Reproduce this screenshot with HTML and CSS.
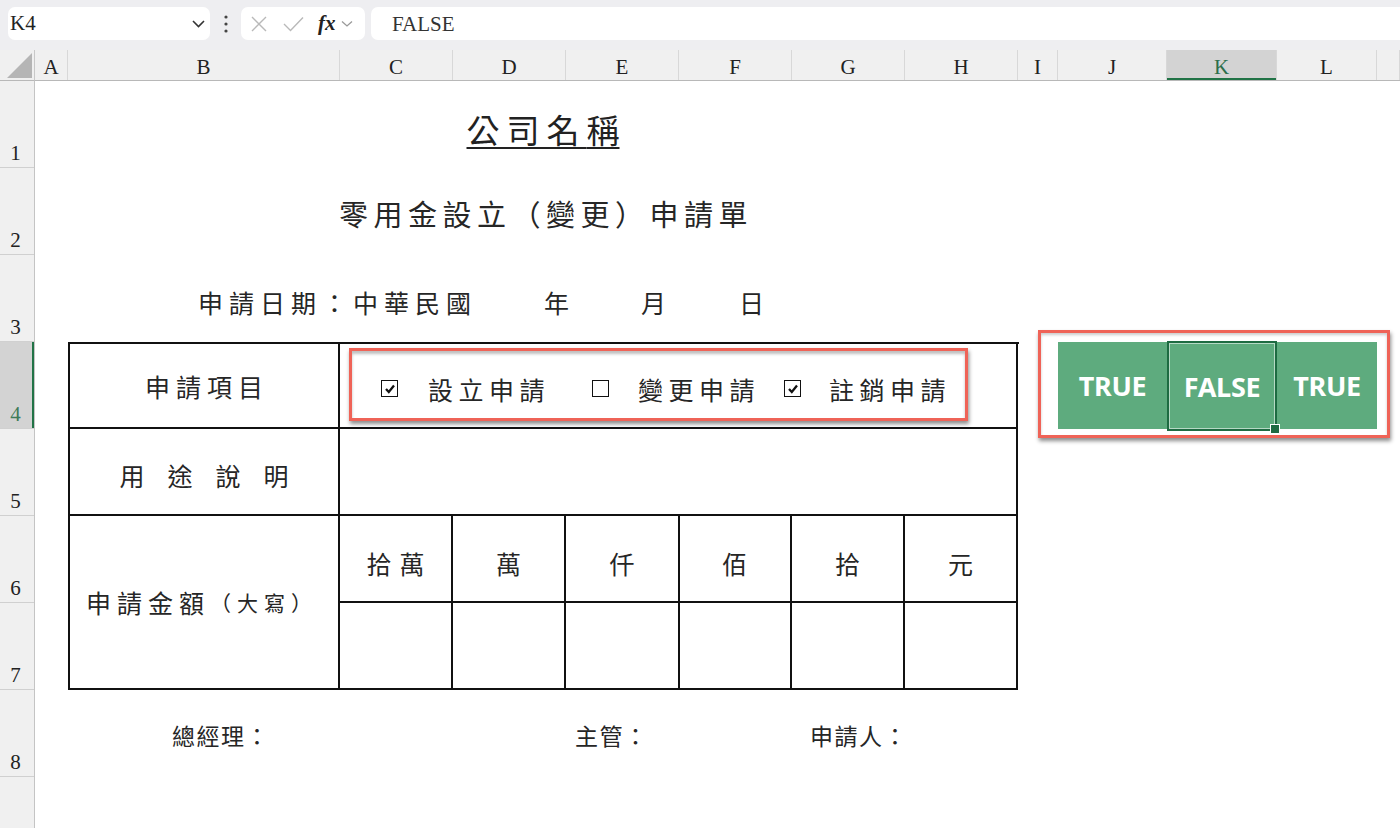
FILE: index.html
```html
<!DOCTYPE html>
<html lang="zh-Hant">
<head>
<meta charset="utf-8">
<title>零用金設立（變更）申請單</title>
<link rel="stylesheet" href="styles.css">
</head>
<body>
<div class="app">
  <div class="fbar">
    <div class="namebox">
      <span class="nb-text">K4</span>
      <svg class="chev" width="13" height="8" viewBox="0 0 13 8"><path d="M1 1 L6.5 6.5 L12 1" fill="none" stroke="#333" stroke-width="1.6"/></svg>
    </div>
    <div class="vdots">
      <svg width="4" height="18" viewBox="0 0 4 18"><circle cx="2" cy="2" r="1.6" fill="#444"/><circle cx="2" cy="9" r="1.6" fill="#444"/><circle cx="2" cy="16" r="1.6" fill="#444"/></svg>
    </div>
    <div class="fxgroup">
      <svg class="ic-x" width="18" height="18" viewBox="0 0 18 18"><path d="M2 2 L16 16 M16 2 L2 16" fill="none" stroke="#b9b9b9" stroke-width="1.4"/></svg>
      <svg class="ic-ok" width="21" height="16" viewBox="0 0 21 16"><path d="M1 8 L7.5 14.5 L20 1.5" fill="none" stroke="#b9b9b9" stroke-width="1.4"/></svg>
      <span class="fx">fx</span>
      <svg class="ic-chev" width="12" height="8" viewBox="0 0 12 8"><path d="M1 1.5 L6 6 L11 1.5" fill="none" stroke="#9a9a9a" stroke-width="1.3"/></svg>
    </div>
    <div class="formula">FALSE</div>
  </div>

  <div class="sheet">
    <div class="corner">
      <svg width="35" height="31" viewBox="0 0 35 31"><polygon points="7,28 32,28 32,3" fill="#b5b5b5"/></svg>
    </div>
    <div class="colheads">
      <div class="ch">A</div>
      <div class="ch">B</div>
      <div class="ch">C</div>
      <div class="ch">D</div>
      <div class="ch">E</div>
      <div class="ch">F</div>
      <div class="ch">G</div>
      <div class="ch">H</div>
      <div class="ch">I</div>
      <div class="ch">J</div>
      <div class="ch sel">K</div>
      <div class="ch">L</div>
      <div class="ch last"></div>
    </div>
    <div class="rowheads">
      <div class="rh">1</div>
      <div class="rh">2</div>
      <div class="rh">3</div>
      <div class="rh sel">4</div>
      <div class="rh">5</div>
      <div class="rh">6</div>
      <div class="rh">7</div>
      <div class="rh">8</div>
      <div class="rh"></div>
    </div>
    <div class="cells">
      <div class="title"><span class="title-text">公司名<span class="nols">稱</span></span></div>
      <div class="subtitle"><span>零用金設立（變更）申請單</span></div>
      <div class="date">
        <span class="d-main">申請日期：中華民國</span>
        <span class="d-y">年</span>
        <span class="d-m">月</span>
        <span class="d-d">日</span>
      </div>

      <div class="form">
        <div class="fc lab-item">申請項目</div>
        <div class="fc items">
          <div class="items-box">
            <span class="cb cb1 on"><svg width="14" height="14" viewBox="0 0 14 14"><path d="M3 7 L5.8 10 L11 3.6" fill="none" stroke="#111" stroke-width="2.3"/></svg></span>
            <span class="lbl lbl1">設立申請</span>
            <span class="cb cb2"></span>
            <span class="lbl lbl2">變更申請</span>
            <span class="cb cb3 on"><svg width="14" height="14" viewBox="0 0 14 14"><path d="M3 7 L5.8 10 L11 3.6" fill="none" stroke="#111" stroke-width="2.3"/></svg></span>
            <span class="lbl lbl3">註銷申請</span>
          </div>
        </div>
        <div class="fc lab-use"><span>用</span><span>途</span><span>說</span><span>明</span></div>
        <div class="fc use-val"></div>
        <div class="fc lab-amt"><span class="amt-main">申請金額</span><span class="amt-small">（大寫）</span></div>
        <div class="fc unit">拾萬</div>
        <div class="fc unit">萬</div>
        <div class="fc unit">仟</div>
        <div class="fc unit">佰</div>
        <div class="fc unit">拾</div>
        <div class="fc unit">元</div>
        <div class="fc"></div>
        <div class="fc"></div>
        <div class="fc"></div>
        <div class="fc"></div>
        <div class="fc"></div>
        <div class="fc"></div>
      </div>

      <div class="sig sig1">總經理：</div>
      <div class="sig sig2">主管：</div>
      <div class="sig sig3">申請人：</div>

      <div class="green">
        <div class="g">TRUE</div>
        <div class="g gk">FALSE</div>
        <div class="g">TRUE</div>
        <div class="annot"></div>
      </div>
    </div>
  </div>
</div>
</body>
</html>
```

FILE: styles.css
```css
* {
  box-sizing: border-box;
  margin: 0;
  padding: 0;
}

html, body {
  width: 1400px;
  height: 828px;
  overflow: hidden;
  background: #ffffff;
}

body {
  font-family: "Noto Sans CJK TC", "Noto Sans CJK SC", sans-serif;
  color: #262626;
}

.app {
  display: flex;
  flex-direction: column;
  height: 828px;
}

/* ---------- formula bar ---------- */
.fbar {
  height: 50px;
  flex: none;
  background: #eeeef1;
  display: flex;
  align-items: flex-start;
  padding: 7px 0 0 8px;
}

.namebox {
  width: 202px;
  height: 33px;
  background: #fff;
  border-radius: 7px;
  display: flex;
  align-items: center;
  justify-content: space-between;
  padding: 0 5px 0 2px;
}

.nb-text {
  font-family: "Liberation Serif", serif;
  font-size: 21px;
  color: #222;
}

.vdots {
  width: 31px;
  height: 33px;
  display: flex;
  align-items: center;
  justify-content: center;
}

.fxgroup {
  width: 124px;
  height: 33px;
  background: #fff;
  border-radius: 7px;
  display: flex;
  align-items: center;
  padding-left: 9px;
}

.ic-ok {
  margin-left: 15px;
}

.fx {
  margin-left: 14px;
  font-family: "Liberation Serif", serif;
  font-style: italic;
  font-weight: 700;
  font-size: 21px;
  color: #222;
  line-height: 1;
}

.ic-chev {
  margin-left: 5px;
}

.formula {
  flex: 1;
  margin-left: 6px;
  height: 33px;
  background: #fff;
  border-radius: 7px 0 0 7px;
  padding-left: 21px;
  font-family: "Liberation Serif", serif;
  font-size: 21px;
  line-height: 34px;
  color: #333;
}

/* ---------- sheet ---------- */
.sheet {
  flex: 1;
  display: grid;
  grid-template-columns: 35px 1fr;
  grid-template-rows: 31px 1fr;
  overflow: hidden;
}

.corner {
  background: #f0f0f0;
  border-bottom: 1px solid #b8b8b8;
  border-right: 1px solid #c8c8c8;
}

.corner svg {
  display: block;
}

.colheads {
  display: grid;
  grid-template-columns: 33px 272px repeat(6, 113px) 40px 109px 110px 100px 1fr;
  background: #f0f0f0;
  border-bottom: 1px solid #b8b8b8;
}

.ch {
  border-right: 1px solid #d8d8d8;
  font-family: "Liberation Serif", serif;
  font-size: 21px;
  color: #222;
  text-align: center;
  line-height: 26px;
  padding-top: 4px;
}

.ch.sel {
  background: #d3d3d3;
  color: #2c6e4b;
  box-shadow: inset 0 -2px 0 #217346;
}

.rowheads {
  display: flex;
  flex-direction: column;
  background: #f0f0f0;
  border-right: 1px solid #c4c4c4;
}

.rh {
  height: 87px;
  flex: none;
  border-bottom: 1px solid #d0d0d0;
  display: flex;
  align-items: flex-end;
  justify-content: center;
  padding: 0 3px 2px 0;
  font-family: "Liberation Serif", serif;
  font-size: 21px;
  line-height: 24px;
  color: #222;
}

.rh.sel {
  background: #d3d3d3;
  color: #3f7b59;
  box-shadow: inset -2px 0 0 #217346;
}

.cells {
  display: grid;
  grid-template-columns: 33px 272px repeat(6, 113px) 40px 109px 110px 100px 1fr;
  grid-template-rows: repeat(9, 87px);
}

/* titles */
.title {
  grid-column: 2 / 9;
  grid-row: 1;
  display: flex;
  justify-content: center;
  align-items: flex-end;
  padding-bottom: 19px;
}

.title-text {
  font-size: 33px;
  line-height: 40px;
  letter-spacing: 7px;
  text-decoration: underline;
  text-decoration-thickness: 2px;
  text-underline-offset: 4px;
  color: #222;
}

.nols {
  letter-spacing: 0;
}

.subtitle {
  grid-column: 2 / 9;
  grid-row: 2;
  display: flex;
  justify-content: center;
  align-items: flex-end;
  padding: 0 0 24px 6px;
  font-size: 29px;
  line-height: 35px;
  letter-spacing: 5.5px;
}

.date {
  grid-column: 2 / 9;
  grid-row: 3;
  display: flex;
  align-items: flex-end;
  padding: 0 0 25px 130px;
  font-size: 25px;
  line-height: 30px;
}

.d-main {
  letter-spacing: 6px;
}

.d-y {
  margin-left: 67px;
}

.d-m {
  margin-left: 72px;
}

.d-d {
  margin-left: 73px;
}

/* form table */
.form {
  grid-column: 2 / 9;
  grid-row: 4 / 8;
  display: grid;
  grid-template-columns: 270px repeat(6, 113px);
  grid-template-rows: 85px 87px 87px 87px;
  border-left: 2px solid #111;
  border-top: 2px solid #111;
  width: 951px;
}

.fc {
  border-right: 2px solid #111;
  border-bottom: 2px solid #111;
  display: flex;
  align-items: center;
  justify-content: center;
  font-size: 25px;
  line-height: 30px;
}

.fc:nth-child(8),
.fc:nth-child(14) {
  width: 114px;
}

.lab-item {
  letter-spacing: 6px;
  padding-left: 6px;
}

.items {
  grid-column: 2 / 8;
  justify-content: flex-start;
  align-items: flex-start;
}

.items-box {
  margin: 4px 0 0 9px;
  width: 619px;
  height: 73px;
  border: 3px solid #ef6357;
  box-shadow: 1px 3px 4px rgba(0, 0, 0, 0.45), inset 0 3px 3px rgba(0, 0, 0, 0.25);
  display: flex;
  align-items: center;
  padding: 8px 0 0 29px;
}

.cb {
  width: 17px;
  height: 17px;
  flex: none;
  border: 1.5px solid #111;
  display: flex;
  align-items: center;
  justify-content: center;
  background: #fff;
}

.lbl {
  font-size: 25px;
  letter-spacing: 5.5px;
  white-space: nowrap;
}

.lbl1 {
  margin-left: 30px;
}

.cb2 {
  margin-left: 42px;
}

.lbl2 {
  margin-left: 29px;
}

.cb3 {
  margin-left: 24px;
}

.lbl3 {
  margin-left: 28px;
}

.lab-use {
  gap: 23px;
  padding-top: 6px;
}

.use-val {
  grid-column: 2 / 8;
}

.lab-amt {
  grid-row: 3 / 5;
  padding-right: 4px;
  white-space: nowrap;
}

.amt-main {
  letter-spacing: 6px;
}

.amt-small {
  font-size: 21px;
  letter-spacing: 6px;
}

.unit {
  letter-spacing: 8px;
  padding: 8px 0 0 8px;
}

/* signatures */
.sig {
  grid-row: 8;
  display: flex;
  align-items: center;
  font-size: 23px;
  letter-spacing: 1.5px;
  white-space: nowrap;
  padding-top: 2px;
}

.sig1 {
  grid-column: 2 / 3;
  padding-left: 104px;
}

.sig2 {
  grid-column: 5 / 6;
  padding-left: 9px;
}

.sig3 {
  grid-column: 7 / 8;
  padding-left: 18px;
}

/* green result cells */
.green {
  grid-column: 10 / 13;
  grid-row: 4;
  display: grid;
  grid-template-columns: 109px 110px 100px;
  position: relative;
}

.g {
  background: #5eab7e;
  color: #ffffff;
  font-family: "Noto Sans", "Open Sans", sans-serif;
  font-weight: 700;
  font-size: 27px;
  display: flex;
  align-items: center;
  justify-content: center;
  letter-spacing: -0.3px;
}

.gk {
  position: relative;
  border: 2px solid #1e6b42;
  box-shadow: inset 0 0 0 1px rgba(255, 255, 255, 0.55);
  margin: -1px 0 -2px;
}

.gk::after {
  content: "";
  position: absolute;
  right: -5px;
  bottom: -5px;
  width: 8px;
  height: 8px;
  background: #1e6b42;
  border: 1px solid #ffffff;
}

.annot {
  position: absolute;
  left: -20px;
  top: -12px;
  width: 352px;
  height: 108px;
  border: 3px solid #ef6357;
  box-shadow: 1px 3px 4px rgba(0, 0, 0, 0.45), inset 0 2px 3px rgba(0, 0, 0, 0.2);
  pointer-events: none;
}
```
